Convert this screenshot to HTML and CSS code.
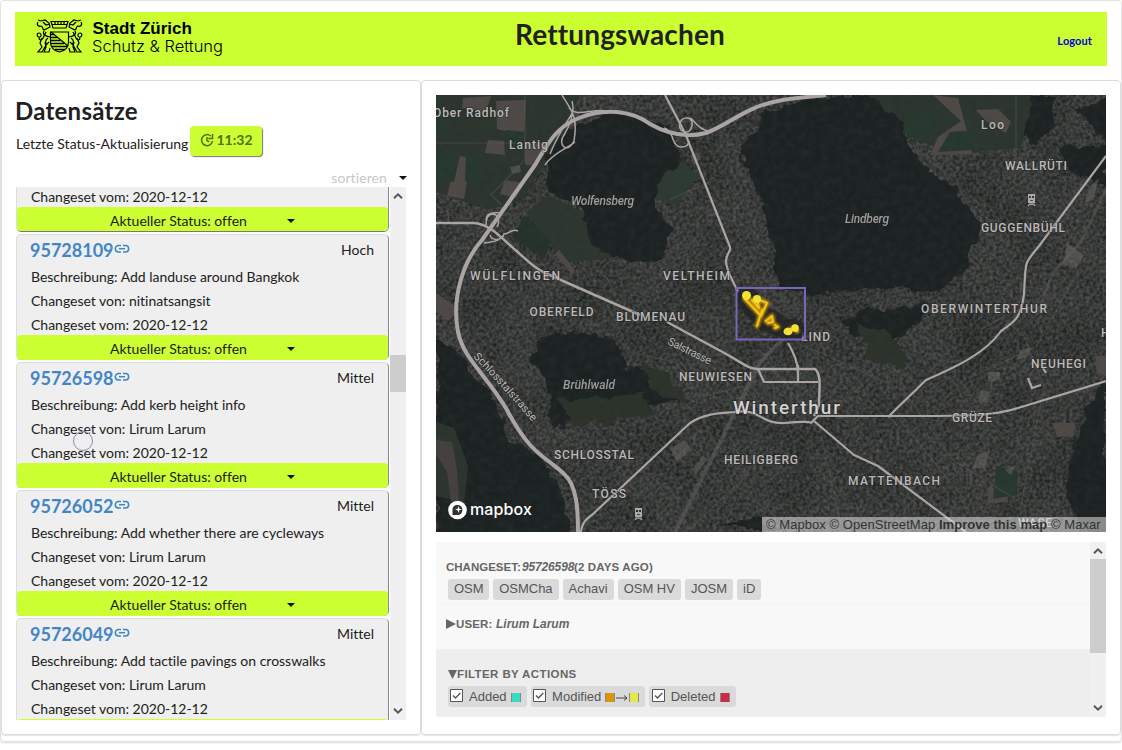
FILE: index.html
```html
<!DOCTYPE html>
<html lang="de">
<head>
<meta charset="utf-8">
<title>Rettungswachen</title>
<link rel="stylesheet" href="styles.css">
</head>
<body>
<svg width="0" height="0" class="defs">
  <symbol id="link" viewBox="0 0 16 10"><path d="M7 1.500H4.500a3.200 3.200 0 0 0 0 6.400H7M9 1.500h2.500a3.200 3.200 0 0 1 0 6.400H9M5 4.700h6" fill="none" stroke="currentColor" stroke-width="1.500"/></symbol>
  <symbol id="up" viewBox="0 0 8 6"><path d="M.8 4.800 4 1.600l3.200 3.200" fill="none" stroke="#555" stroke-width="1.500"/></symbol>
  <symbol id="down" viewBox="0 0 8 6"><path d="M.8 1.200 4 4.400l3.200-3.200" fill="none" stroke="#555" stroke-width="1.500"/></symbol>
  <symbol id="check" viewBox="0 0 13 13"><path d="M.5.500h12v12H.500z" fill="#fff" stroke="#555"/><path d="m3 6.500 2.500 2.500L10.300 4" fill="none" stroke="#555" stroke-width="1.400"/></symbol>
</svg>
<div class="app">
  <header class="header">
    <svg class="logo" width="190" height="40" viewBox="35 18 190 40">
      <g fill="none" stroke="#000" stroke-width="1.200">
        <path d="M50.500 32h18v10.500c0 4.500-3.500 8.500-9 9.500-5.500-1-9-5-9-9.500z"/>
        <path d="m51 32 17 14"/>
        <path d="M51 34.500h3M51 37.500h6M51 40.500h9.500M51 43.500h13M52 46.500h15M55 49.500h10" stroke-width="1.500"/>
        <path d="M51 21.500h17l-2 6.500h-13z M52 24.500h15 M55 21v4M58 21v4M61 21v4M64 21v4"/>
        <g id="lion"><path d="M38 22c-2 3 1 5 3 4 2 0 1 3 3 4l6-3-1-4-4-3-4 1-3-1M43 22l3 3 4-1M44 31c-2 3 1 5 6 6M39 33c-3 0-2 5 1 4 2-1 1-4-1-4M39 38c1 4 4 1 5-2l2-4M42 38l-2 5 2 4-4 5h4l4-7 3-3M45 42l1 5-2 5h5l1-4M48 38c-3 2-3 5-1 7"/></g>
        <use href="#lion" transform="matrix(-1 0 0 1 119 0)"/>
      </g>
      <text x="92.500" y="34" class="logo-bold" textLength="99.500">Stadt Zürich</text>
      <text x="92" y="52" class="logo-light" textLength="131">Schutz &amp; Rettung</text>
    </svg>
    <h1 class="title">Rettungswachen</h1>
    <a class="logout">Logout</a>
  </header>
  <main class="columns">
    <section class="panel datasets">
      <h2 class="heading">Datensätze</h2>
      <div class="update"><span>Letzte Status-Aktualisierung</span>
        <span class="time"><svg width="14" height="14" viewBox="0 0 14 14" fill="none" stroke="currentColor" stroke-width="1.500"><path d="M10.700 3A5.500 5.500 0 1 0 12.500 8M12.500 1v4.500H8.300M7 4v3.500l2.300 1.400"/></svg>11:32</span></div>
      <div class="sort"><span>sortieren</span><i class="caret"></i></div>
      <div class="scroller">
        <div class="cards">
          <article class="card cut"><p>Changeset vom: 2020-12-12</p><div class="status">Aktueller Status: offen<i class="caret"></i></div></article>
          <article class="card"><div class="card-head"><b>95728109</b><svg width="16" height="10"><use href="#link"/></svg><span>Hoch</span></div><p>Beschreibung: Add landuse around Bangkok</p><p>Changeset von: nitinatsangsit</p><p>Changeset vom: 2020-12-12</p><div class="status">Aktueller Status: offen<i class="caret"></i></div></article>
          <article class="card"><div class="card-head"><b>95726598</b><svg width="16" height="10"><use href="#link"/></svg><span>Mittel</span></div><p>Beschreibung: Add kerb height info</p><p>Changeset von: Lirum Larum</p><p>Changeset vom: 2020-12-12</p><div class="status">Aktueller Status: offen<i class="caret"></i></div></article>
          <article class="card"><div class="card-head"><b>95726052</b><svg width="16" height="10"><use href="#link"/></svg><span>Mittel</span></div><p>Beschreibung: Add whether there are cycleways</p><p>Changeset von: Lirum Larum</p><p>Changeset vom: 2020-12-12</p><div class="status">Aktueller Status: offen<i class="caret"></i></div></article>
          <article class="card"><div class="card-head"><b>95726049</b><svg width="16" height="10"><use href="#link"/></svg><span>Mittel</span></div><p>Beschreibung: Add tactile pavings on crosswalks</p><p>Changeset von: Lirum Larum</p><p>Changeset vom: 2020-12-12</p><div class="status"></div></article>
        </div>
        <div class="bar list-bar"><svg width="10" height="8"><use href="#up"/></svg><i class="thumb"></i><svg width="10" height="8"><use href="#down"/></svg></div>
      </div>
    </section>
    <section class="panel detail">
      <div class="map">
        <svg width="670" height="437" viewBox="436 95 670 437">
          <defs>
            <filter id="rough" x="-5%" y="-5%" width="110%" height="110%"><feTurbulence type="fractalNoise" baseFrequency=".06" numOctaves="3" seed="4"/><feDisplacementMap in="SourceGraphic" scale="16" xChannelSelector="R" yChannelSelector="G"/></filter>
            <filter id="grain" x="0" y="0" width="100%" height="100%" color-interpolation-filters="sRGB"><feTurbulence type="fractalNoise" baseFrequency=".3" numOctaves="3" seed="9"/><feColorMatrix values=".6 0 0 0 -.07  .6 0 0 0 -.065  .6 0 0 0 -.07  0 0 0 0 .5"/></filter>
            <filter id="soft" x="0" y="0" width="100%" height="100%" color-interpolation-filters="sRGB"><feTurbulence type="fractalNoise" baseFrequency=".022" numOctaves="3" seed="3"/><feColorMatrix values="0 0 0 0 .12  0 0 0 0 .15  0 0 0 0 .13  1.800 0 0 0 -.65"/></filter>
            <filter id="leaf" x="0" y="0" width="100%" height="100%" color-interpolation-filters="sRGB"><feTurbulence type="fractalNoise" baseFrequency=".14" numOctaves="3" seed="2"/><feColorMatrix values="0 0 0 0 .22  0 0 0 0 .25  0 0 0 0 .23  .5 0 0 0 -.18"/></filter>
            <filter id="glow"><feGaussianBlur stdDeviation=".9"/></filter>
          </defs>
          <path fill="#3c3e3c" d="M436 95h670v437H436z"/>
          <path filter="url(#soft)" d="M436 95h670v437H436z"/>
          <path filter="url(#grain)" d="M436 95h670v437H436z"/>
          <g fill="#2b352e">
            <path d="M436 95h144l-18 40-40 65-34 10-52-18z"/><path d="M524 216l30 18-10 25-32-22z" fill="#24322a"/>
            <path d="M548 195l50 25 28 36-60 7-40-50z" fill="#2d352f"/><path d="M655 172l22-18 21 22-22 30-25-9z" fill="#2d3a31"/>
            <path d="M868 95h164l3 18-15 35-70 5-44-18-30-22z"/>
          </g>
          <g fill="#504a47">
            <path d="m463 98 28-2-5 16-24-4zM496 101l30-1-2 36-27-7zM488 140l16 1 1 14-20-2zM525 143l22-1-10 24-12-1zM457 155l14 4-7 40-17-3zM505 180l19 3-8 15-16-4zM559 250l16 20-3 5-17-21z"/>
            <path d="m933 95 25 3 13 48 1 8-42 1 8-18 23-16zM976 110l22-1 13 13-5 11-20-12z"/>
            <path d="m436 293 24 16-12 12-12-10z"/>
            <path d="m1053 423 22 0-1 13-17 1zM989 488l18 2 1 12-21 1zM1095 356l11 0v20l-9-3z"/>
          </g>
          <g fill="#26382d"><path d="m466 155 18-1-3 30-16-3zM910 115l28-6-5 25-27 5zM950 132l27-2-5 20-34 2zM436 115l18 2-6 18-12-5zM506 130l19 2-1 18-18 0zM436 150l25 1-7 31-18-3zM996 466l22 5-1 24-24 4z"/></g>
          <g fill="#1e2322" filter="url(#rough)">
            <path d="m572 127 48-16 50 20 10 32-23 17 3 37 12 18-12 24-26 2-33-9-20-43-36-20 2-36z"/>
            <path d="M765 112l50-15 58 0 30 25 10 33 38 30 28 38-10 45-35 25-60-5-70 7-25-12-10-50-8-40-22-38z"/>
            <path d="m543 338 35-6 30 5 27 32 32 21 12 12-38 2-40 3-40 22-15-13 5-17-9-20-12-20z"/>
            <path d="M436 335l18 10 33 47 25 48 35 27 18 36 6 42H436z"/>
            <path d="m1030 97 28 0-4 30-18 18-16-6zM1063 145l43 3v40l-14-6-27-18zM1077 110l29-12v45l-15-20zM1090 402l16-22v155l-28-5-12-45 5-37zM838 325l28-15 60-5-12 25-30 13-35-10zM720 525l35-8 30 15z"/>
          </g>
          <path d="M436 422l18 6 14 38-4 36-28-6z" fill="#2b352e"/><path d="m436 440 16 2 5 28 2 30-8 2-4-30-11-18z" fill="#46413e"/>
          <path d="M855 320l33 12 20 28 -8 9-30-13zM560 400l86-7 8 22-80 12zM640 365l22 3 26 34-18-3-24-16z" fill="#29322c" filter="url(#rough)"/>
          <path filter="url(#leaf)" d="M436 95h670v437H436z"/>
          <g fill="none" stroke="#5a5856" stroke-width="1.200" opacity=".5">
            <path d="M525 95v65l-34 35 11 10M436 143h80M670 200l18-9 30-12M436 338l40 16 60 72 35 13M610 310l20 42 45 10 25 35 50-12M700 415l17 30 30 30-60 57M760 350l60 80 20 90M803 345l100 45 50 70 80 50M900 420l65 80M980 330l22-12 22 18 20 50-24 125M1016 95v75M1106 260l-30 15-40 72-65 30"/>
            <path d="m675 532 85-170 25-25" stroke="#646463" stroke-width="4"/><path d="m1106 190-24 50-30 35-15 40" stroke-width="3"/>
          </g>
          <g fill="#696765" opacity=".5"><path d="m510 167 10-2 1 7-9 2zM670 448l15-8 6 10-14 12zM692 470l11-14 4 3-11 16zM978 455l12-5-5 19-12-2zM1005 470l10-4-4 9zM988 372l12 0 0 8-12 2zM980 390l10 2-2 11-9-1zM1090 186l9-8-6 22-8 3zM1067 243l17 12-8 14-13-5zM1020 350l11-3-2 9-12 4zM690 155l9-3 2 7-7 6z"/></g>
          <g fill="none" stroke="#aaa5a4" stroke-linejoin="round">
            <path stroke-width="4" d="M578 532c0-22-1-47-14-58-17-17-33-18-57-64-20-35-43-50-49-78-7-37 7-73 24-92l53-75c14-24 23-39 44-47 25-10 52-8 71 6 21 12 40 13 56 9 25-9 39-27 77-33 18-3 28-3 43-5"/>
            <path stroke-width="1.500" d="M562 95c10 16 16 22 12 46-7 14-17 3-10-6 9-15 10-27 8-34M569 108c9 10 22 0 39 3M573 112c-7 12-14 20-23 42M575 142c-4 4-24 12-30 23"/>
            <path stroke-width="1.500" d="M670 131c2 5 4 16 11 16 5 0 8-2 8-6M681 121c1-3 9-5 11 1 1 6-3 11-7 10-6-2-7-7-4-11M690 118c5 2 6 10 18 13M664 128c5 1 6 5 9 10"/>
            <path stroke-width="2.200" d="m665 95 20 38 45 114c1 6-4 6-4 14 0 9 6 18 12 31M788 343c6 10 10 20 10 30"/>
            <path stroke-width="2.500" d="M436 223h37c18 1 28 15 39 24 12 10 20 20 33 26l95 42M667 322l50 27c27 14 30 20 41 20h57c7 6 4 20 4 36l-5 11"/>
            <path stroke-width="1.500" d="M486 225c0-5 1-10 6-11 7 0 8 8 5 13M502 213c-9-1-16 0-16 7M484 243c12-1 18-4 20-9 6 0 7-6 14-3M490 235c2 6 12 6 14-1"/>
            <path stroke-width="2.200" d="M758 369l6 13h54M798 365v17M581 532c1-9 4-12 12-18l97-91c15-10 32-10 44-11 27-4 26 12 50 11 20-2 28-1 27 0l7-7h100c40 0 75 0 100-8 23-7 52-16 88-27"/>
            <path stroke-width="2.200" d="m814 421 40 34 24 11 88 66M888 417l38-37c30-13 60-27 75-49 15-10 20-14 23-37 2-36 0-29 15-48l67-90M1028 378l4 10 9-3M1043 368l3 5"/>
          </g>
          <g class="label" fill="#bdb9b8">
            <text x="433" y="117" textLength="76">Ober Radhof</text><text x="509" y="149" textLength="39">Lantig</text><text x="981" y="129" textLength="23">Loo</text>
            <text x="1005" y="170" textLength="62">WALLRÜTI</text><text x="981" y="232" textLength="84">GUGGENBÜHL</text><text x="470" y="279.500" textLength="90">WÜLFLINGEN</text><text x="663" y="279.500" textLength="67">VELTHEIM</text>
            <text x="529.500" y="315.500" textLength="64">OBERFELD</text><text x="616" y="321" textLength="69">BLUMENAU</text><text x="921" y="313" textLength="126">OBERWINTERTHUR</text><text x="801" y="341" textLength="29">LIND</text>
            <text x="679" y="380.500" textLength="73">NEUWIESEN</text><text x="1031" y="367.500" textLength="55">NEUHEGI</text><text x="1101" y="337">H</text><text x="952" y="422" textLength="40">GRÜZE</text><text x="554" y="459" textLength="80">SCHLOSSTAL</text>
            <text x="724" y="464" textLength="74">HEILIGBERG</text><text x="848" y="484.500" textLength="92">MATTENBACH</text><text x="592" y="497.500" textLength="34">TÖSS</text><text x="1018" y="527" textLength="34">WASE</text>
            <g font-style="italic" opacity=".8"><text x="571" y="205" textLength="63">Wolfensberg</text><text x="845" y="223" textLength="44">Lindberg</text><text x="563" y="389" textLength="52">Brühlwald</text></g>
            <text x="667" y="344" class="street" textLength="47" transform="rotate(26 667 344)">Salstrasse</text>
            <path id="street" d="M473 357c22 22 38 41 64 70" fill="none" stroke="none"/><text class="street"><textPath href="#street" textLength="88">Schlosstalstrasse</textPath></text>
            <text x="733" y="414" class="city" textLength="107">Winterthur</text>
          </g>
          <g id="train" fill="#aaa"><path fill-rule="evenodd" d="M1028 194h7v9h-7zM1029 196v2h2v-2zm3 0v2h2v-2zM1030 200v1h3v-1zM1027.500 206l1.500-2.500h5l1.500 2.500h-1.500l-.7-1.200h-3.600l-.7 1.200z"/></g><use href="#train" x="-393" y="314"/>
          <path d="M747 298l18 22M788 330l6 0M770 320l8 5" stroke="#202124" stroke-width="22" stroke-linecap="round" opacity=".75"/>
          <path d="M736.500 288h68.500v51.500h-68.500z" fill="none" stroke="#7b65bb" stroke-width="2"/>
          <g fill="none" stroke-linecap="round" stroke-linejoin="round"><g stroke="#c08a08" stroke-width="5" filter="url(#glow)"><path id="trace" d="m745 299 16 17 6-13-10-4 2 9-7-8M762 310l-5 16M766 321l6-5 1 6-5 1M775 325l3 2-3 1M789 330l6-2 2 3"/></g><use href="#trace" stroke="#efc516" stroke-width="2"/></g>
          <g fill="#f2e231"><circle cx="746.500" cy="295.500" r="4.500"/><circle cx="757" cy="299" r="4"/><ellipse cx="788" cy="331.500" rx="4.500" ry="3.800"/><circle cx="795" cy="328" r="3.800"/></g>
          <g><circle cx="457.500" cy="510" r="9.300" fill="#fff"/><path d="M452.500 515v-6a5 5 0 1 1 5 6z" fill="#303332"/><path d="M458.500 506l.8 2.700 2.700.8-2.700.8-.8 2.700-.8-2.700-2.700-.8 2.700-.8z" fill="#fff"/><text x="470" y="515" class="mapbox" textLength="62">mapbox</text></g>
        </svg>
        <div class="attribution"><span>© Mapbox</span> <span>© OpenStreetMap</span> <b>Improve this map</b> <span>© Maxar</span></div>
      </div>
      <div class="info">
        <div class="info-body">
          <div class="block change"><h3 class="label-row"><span class="cs">CHANGESET:</span><em>95726598</em><span class="days">(2 DAYS AGO)</span></h3>
            <div class="chips"><span>OSM</span><span>OSMCha</span><span>Achavi</span><span>OSM HV</span><span>JOSM</span><span>iD</span></div></div>
          <div class="block user"><h3 class="label-row"><svg width="10" height="10"><path d="M0 0v10l10-5z"/></svg><span class="us">USER:</span><em>Lirum Larum</em></h3></div>
          <div class="block filter"><h3 class="label-row"><svg width="9" height="9"><path d="M0 0h9L4.500 9z"/></svg><span class="fi">FILTER BY ACTIONS</span></h3>
            <div class="chips actions"><span><svg width="13" height="13"><use href="#check"/></svg>Added<i class="swatch added"></i></span><span><svg width="13" height="13"><use href="#check"/></svg>Modified<i class="swatch old"></i><svg class="arrow" width="14" height="9"><path d="M1 5h11M9 2.500 12 5 9 7.500" fill="none" stroke="#444"/></svg><i class="swatch new"></i></span><span><svg width="13" height="13"><use href="#check"/></svg>Deleted<i class="swatch deleted"></i></span></div></div>
        </div>
        <div class="bar info-bar"><svg width="10" height="8"><use href="#up"/></svg><i class="thumb"></i><svg width="10" height="8"><use href="#down"/></svg></div>
      </div>
    </section>
  </main>
</div>
<div class="pointer"></div>
</body>
</html>
```

FILE: styles.css
```css
* { box-sizing: border-box; }
body { margin: 0; width: 1122px; height: 750px; overflow: hidden; background: #fff; font: 14px/24px Lato, sans-serif; color: #212121; font-variant-ligatures: none; }
h1, h2, h3, p { margin: 0; }
.defs { position: absolute; }
.app { width: 1122px; height: 742px; padding: 11px 0 0; border: 1px solid #e2e2e2; border-radius: 4px; box-shadow: 0 1px 2px #ddd; }
.header { height: 54px; margin: 0 14px 14px; background: #cbff32; display: grid; grid-template-columns: 1fr auto 1fr; }
.logo { margin: 6px 0 0 20px; }
.logo-bold { font: bold 17px "Liberation Sans", sans-serif; }
.logo-light { font: 300 16.5px Inter, "Liberation Sans", sans-serif; }
.title { font-size: 28px; line-height: 45px; margin-left: 118px; letter-spacing: .15px; }
.logout { justify-self: end; margin: 17px 15px 0 0; font-size: 11px; font-weight: bold; color: #0000de; letter-spacing: .1px; }
.columns { display: flex; }
.panel { height: 655px; border: 1px solid #dcdcdc; border-radius: 4px; box-shadow: 0 1px 1px #e5e5e5; }
.datasets { width: 420px; padding: 13px 13px 0 14px; }
.detail { width: 700px; padding: 14px; }
.heading { font-size: 24px; line-height: 34px; margin-left: -1px; letter-spacing: .25px; }
.update { display: flex; height: 30px; margin: -2px 0 0 0; gap: 2px; }
.update > span:first-child { padding-top: 6px; width: 172px; white-space: nowrap; }
.time { display: flex; gap: 2px; align-items: center; width: 72px; height: 30px; justify-content: center; background: #cbff32; border-radius: 4px; box-shadow: 1px 1px 1px #777; color: #566c15; font-weight: bold; line-height: 28px; padding: 0 0 2px 1px; }
.sort { display: flex; justify-content: flex-end; align-items: center; gap: 12px; color: #c8c8c8; height: 24px; margin-top: 10px; letter-spacing: .1px; }
.caret { width: 0; height: 0; border: 4px solid transparent; border-top-color: #111; border-bottom: 0; }
.scroller { display: flex; height: 533px; margin-top: -3px; overflow: hidden; }
.cards { width: 374px; }
.card { width: 373px; height: 126px; margin-bottom: 2px; padding: 1px 1px 0; background: #efefef; border: 1px solid #ddd; border-right-color: #888; border-bottom-color: #777; border-radius: 5px; }
.card p { padding-left: 13px; letter-spacing: -.01px; }
.card.cut { height: 45px; border-top: 0; border-radius: 0 0 5px 5px; padding: 0; }
.card.cut p { height: 20px; line-height: 20px; padding-left: 14px; }
.card-head { display: flex; height: 29px; padding: 0 13px 0 12px; align-items: flex-start; line-height: 28px; }
.card-head b { font-size: 18px; color: #4285c8; }
.card-head svg { margin: 8px 0 0 0; color: #4285c8; }
.card-head span { margin-left: auto; }
.status { height: 25px; margin: -2px -1px 0; border-radius: 4px; background: #cbff32; display: flex; align-items: center; padding: 2px 0 0 93px; line-height: 23px; }
.status .caret { margin-left: 40px; }
.card.cut .status { margin: 0; height: 24px; padding-top: 3px; }
.bar { width: 16px; background: #f0f0f0; display: flex; flex-direction: column; align-items: center; padding: 5px 0; justify-content: space-between; }
.bar svg { flex: none; }
.thumb { width: 16px; flex: none; background: #cdcdcd; }
.list-bar .thumb { height: 37px; margin-top: -161px; }
.map { position: relative; height: 437px; }
.map > svg { display: block; }
.label { font: 500 12px Roboto, sans-serif; paint-order: stroke; stroke: rgba(30,32,31,.5); stroke-width: 1.5px; }
.street { font-size: 11px; font-weight: 400; }
.city { font-size: 19px; fill: #d4d1d0; }
.mapbox { font: 500 16px Inter, sans-serif; fill: #fff; }
.attribution { position: absolute; right: 0; bottom: 0; width: 344px; height: 15px; padding-left: 4px; background: rgba(225,225,225,.55); color: #333; font: 13px/15px "Liberation Sans", sans-serif; letter-spacing: .05px; white-space: nowrap; }
.info { display: flex; height: 175px; margin-top: 10px; color: #666; font-family: "Liberation Sans", sans-serif; border-radius: 3px; overflow: hidden; }
.info-body { width: 654px; background: #f8f8f8; }
.block { padding-left: 10px; }
.change { height: 63px; padding-top: 17px; border-bottom: 1px solid #f4f4f4; }
.user { height: 44px; padding-top: 11px; }
.filter { height: 68px; padding-top: 17px; background: #eee; }
.label-row { display: flex; align-items: center; font-size: 12px; line-height: 16px; height: 16px; white-space: nowrap; }
.label-row svg { fill: #666; }
.label-row span { font-size: 11.500px; letter-spacing: .15px; }
.label-row .cs { width: 76px; letter-spacing: 0; }
.label-row em { width: 52px; letter-spacing: -.15px; }
.label-row .fi { letter-spacing: .4px; }
.us { width: 40px; }
.label-row .us + em { width: auto; letter-spacing: 0; }
.chips { display: flex; gap: 4px; padding: 4px 0 0 2px; font-size: 13px; line-height: 20px; }
.chips > span { background: #dadada; height: 21px; border-radius: 3px; padding: 0 6px; display: flex; color: #555; }
.chips > span:first-child { padding-right: 5.500px; }
.filter .label-row { padding-left: 2px; }
.actions > span, .actions > span:first-child { padding: 0 6px 0 2px; align-items: center; }
.actions > span:nth-child(n+2) { padding-left: 2.500px; }
.actions > span > svg:first-child { margin: -3px 6px 0 0; }
.swatch { width: 10px; height: 9px; margin: 2px 0 0 4px; border: solid #888; border-width: 0 1px; }
.added { background: #39dbc0; } .old { background: #db950a; } .new { background: #e8e845; margin-left: 0; } .deleted { background: #cc2c47; }
.arrow { margin-top: 1px; }
.info-bar .thumb { height: 94px; margin-top: -47px; }
.info-bar { padding: 5px 0; }
.pointer { position: absolute; left: 73px; top: 431px; width: 20px; height: 20px; border: 1px solid #8d8da6; border-radius: 50%; }
```
